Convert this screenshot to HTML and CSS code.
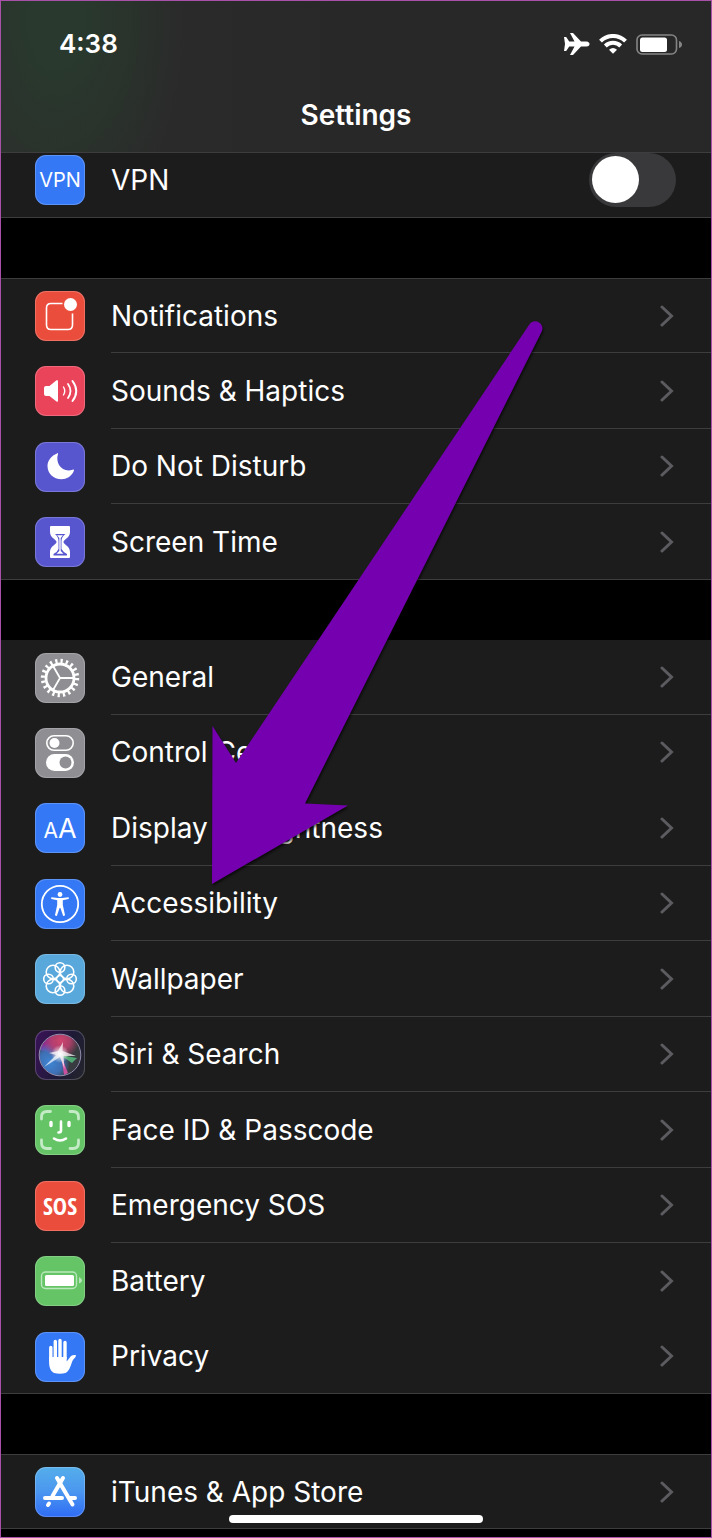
FILE: index.html
```html
<!DOCTYPE html>
<html lang="en">
<head>
    <meta charset="UTF-8">
    <meta name="viewport" content="width=device-width, initial-scale=1.0">
    <title>Settings</title>
    <link rel="stylesheet" href="styles.css">
</head>
<body>
    <svg class="defs" width="0" height="0" aria-hidden="true">
        <symbol id="chevron" viewBox="0 0 14 22">
            <path d="M2 2 L11.500 11 L2 20" fill="none" stroke="#5b5b60" stroke-width="3" stroke-linecap="round"/>
        </symbol>
    </svg>

    <header class="header">
        <div class="status-bar">
            <span class="time">4:38</span>
            <div class="status-icons">
                <svg width="26" height="22" viewBox="0 0 26 22" fill="#fff" aria-label="Airplane mode">
                    <path d="M0 4 H2.200 L5.200 8.500 H10.500 L6 0 H9 L17 8.500 H22.500 Q25.500 9 25.500 11 Q25.500 13 22.500 13.500 H17 L9 22 H6 L10.500 13.500 H5.200 L2.200 18 H0 L1 11 Z"/>
                </svg>
                <svg width="28" height="20" viewBox="0 0 28 20" fill="none" stroke="#fff" stroke-width="4" aria-label="Wi-Fi">
                    <path d="M1.500 7.200 A17.500 17.500 0 0 1 26.500 7.200"/>
                    <path d="M6.300 12 A11 11 0 0 1 21.700 12"/>
                    <path d="M14 19.800 L10 15.800 Q14 12.400 18 15.800 Z" fill="#fff" stroke="none"/>
                </svg>
                <svg width="46" height="21" viewBox="0 0 46 21" aria-label="Battery">
                    <rect x="1" y="1" width="39.500" height="19" rx="5" fill="none" stroke="#858585" stroke-width="1.600"/>
                    <rect x="4" y="3.500" width="27" height="14.500" rx="2.500" fill="#fff"/>
                    <path d="M43 7 Q46 8 46 10.500 Q46 13 43 14 Z" fill="#858585"/>
                </svg>
            </div>
        </div>
        <h1>Settings</h1>
    </header>

    <main>
        <ul class="group group-top">
            <li class="row">
                <span class="icon blue"><span class="vpn-text">VPN</span></span>
                <div class="row-body">
                    <label for="vpn">VPN</label>
                    <input type="checkbox" id="vpn" class="switch" role="switch">
                </div>
            </li>
        </ul>

        <ul class="group">
            <li><a class="row" href="#notifications">
                <span class="icon red"><svg viewBox="0 0 50 50" fill="none" stroke="#fff" stroke-width="1.600">
                    <path d="M27.500 12.500 H16 Q11.500 12.500 11.500 17 V34 Q11.500 38.500 16 38.500 H33 Q37.500 38.500 37.500 34 V22.500"/>
                    <circle cx="35.500" cy="13.500" r="6.500" fill="#fff" stroke="none"/>
                </svg></span>
                <span class="row-body">Notifications <svg class="chevron"><use href="#chevron"/></svg></span>
            </a></li>
            <li><a class="row" href="#sounds">
                <span class="icon pink"><svg viewBox="0 0 50 50" fill="none" stroke="#fff" stroke-linecap="round">
                    <path d="M11 20 H14.500 L21.500 14.300 Q23 13.800 23 15 V35 Q23 36 21.500 35.500 L14.500 30 H11 Q9 30 9 28 V22 Q9 20 11 20 Z" fill="#fff" stroke="none"/>
                    <path d="M28.500 21 Q31 25 28.500 29" stroke-width="1.400"/>
                    <path d="M33 18 Q38 25 33 32" stroke-width="1.800"/>
                    <path d="M37.500 15 Q45 25 37.500 35" stroke-width="2"/>
                </svg></span>
                <span class="row-body">Sounds &amp; Haptics <svg class="chevron"><use href="#chevron"/></svg></span>
            </a></li>
            <li><a class="row" href="#do-not-disturb">
                <span class="icon indigo"><svg viewBox="0 0 50 50" fill="#fff">
                    <path d="M22 11.500 Q23.500 10.500 23 12 C20 21 27 31 37.500 27.800 Q39.500 27 38.800 29 C36.500 34.500 31.500 37.200 26.500 37.200 C18.500 37.200 12.500 31.500 12.500 24 C12.500 18.500 16.500 13.500 22 11.500 Z"/>
                </svg></span>
                <span class="row-body">Do Not Disturb <svg class="chevron"><use href="#chevron"/></svg></span>
            </a></li>
            <li><a class="row" href="#screen-time">
                <span class="icon indigo"><svg viewBox="0 0 50 50">
                    <path d="M16 9 H34 Q35 9 35 10 V15 C35 21 28.500 22.500 28.500 25 C28.500 27.500 35 29 35 35 V40 Q35 41 34 41 H16 Q15 41 15 40 V35 C15 29 21.500 27.500 21.500 25 C21.500 22.500 15 21 15 15 V10 Q15 9 16 9 Z" fill="#fff"/>
                    <path d="M20 17 H30.500 Q26.500 20 26.500 24 V32 Q28.500 35.500 32 37 V38.500 H18.500 V37 Q22 35.500 23.500 32 V24 Q23.500 20 20 17 Z" fill="#5856ce"/>
                    <path d="M22 18.300 H28 L25.700 21 V34 L28.500 36.800 H21.500 L24.300 34 V21 Z" fill="#fff"/>
                </svg></span>
                <span class="row-body">Screen Time <svg class="chevron"><use href="#chevron"/></svg></span>
            </a></li>
        </ul>

        <ul class="group group-device">
            <li><a class="row" href="#general">
                <span class="icon gray"><svg viewBox="0 0 50 50" fill="none" stroke="#fff">
                    <circle cx="25" cy="25" r="17" stroke-width="4.400" stroke-dasharray="2.240 3.101"/>
                    <circle cx="25" cy="25" r="14" stroke-width="2.800"/>
                    <path d="M25 25 H38 M25 25 L18.500 13.700 M25 25 L18.500 36.300" stroke-width="1.800"/>
                </svg></span>
                <span class="row-body">General <svg class="chevron"><use href="#chevron"/></svg></span>
            </a></li>
            <li><a class="row no-line" href="#control-center">
                <span class="icon gray"><svg viewBox="0 0 50 50">
                    <rect x="11.800" y="7.800" width="26.400" height="14.400" rx="7.200" fill="none" stroke="#fff" stroke-width="1.600"/>
                    <circle cx="19.500" cy="15" r="5" fill="#fff"/>
                    <rect x="11" y="26" width="28" height="17" rx="8.500" fill="#fff"/>
                    <circle cx="30.500" cy="34.500" r="6" fill="#8e8e93"/>
                </svg></span>
                <span class="row-body">Control Center <svg class="chevron"><use href="#chevron"/></svg></span>
            </a></li>
            <li><a class="row" href="#display">
                <span class="icon blue"><span class="aa-text"><small>A</small>A</span></span>
                <span class="row-body">Display &amp; Brightness <svg class="chevron"><use href="#chevron"/></svg></span>
            </a></li>
            <li><a class="row" href="#accessibility">
                <span class="icon blue"><svg viewBox="0 0 50 50">
                    <circle cx="25" cy="25" r="18.200" fill="none" stroke="#fff" stroke-width="1.800"/>
                    <circle cx="25" cy="15.500" r="2.400" fill="#fff"/>
                    <path d="M16.500 18.300 L23 19 H27 L33.500 18.300 Q34.500 19.400 33.500 20 L27.800 21.200 V26 L30 36 Q29 37.800 28 36.400 L25.400 29 H24.600 L22 36.400 Q21 37.800 20 36 L22.200 26 V21.200 L16.500 20 Q15.500 19.400 16.500 18.300 Z" fill="#fff"/>
                </svg></span>
                <span class="row-body">Accessibility <svg class="chevron"><use href="#chevron"/></svg></span>
            </a></li>
            <li><a class="row" href="#wallpaper">
                <span class="icon sky"><svg viewBox="0 0 50 50" fill="none" stroke="#fff" stroke-width="1.600">
                    <circle cx="32" cy="18" r="6.800"/>
                    <circle cx="32" cy="32" r="6.800"/>
                    <circle cx="18" cy="32" r="6.800"/>
                    <circle cx="18" cy="18" r="6.800"/>
                    <circle cx="25" cy="13.500" r="4.800"/>
                    <circle cx="36.500" cy="25" r="4.800"/>
                    <circle cx="25" cy="36.500" r="4.800"/>
                    <circle cx="13.500" cy="25" r="4.800"/>
                    <circle cx="25" cy="25" r="3.500"/>
                </svg></span>
                <span class="row-body">Wallpaper <svg class="chevron"><use href="#chevron"/></svg></span>
            </a></li>
            <li><a class="row" href="#siri">
                <span class="icon siri"><svg viewBox="0 0 50 50">
                    <defs>
                        <radialGradient id="siriPink" cx="26" cy="11" r="18" gradientUnits="userSpaceOnUse">
                            <stop offset="0" stop-color="#cf4470"/><stop offset=".500" stop-color="#b8406c" stop-opacity=".900"/><stop offset="1" stop-color="#b8406c" stop-opacity="0"/>
                        </radialGradient>
                        <radialGradient id="siriBlue" cx="15" cy="33" r="20" gradientUnits="userSpaceOnUse">
                            <stop offset="0" stop-color="#3f86d4"/><stop offset=".600" stop-color="#3f78c8" stop-opacity=".850"/><stop offset="1" stop-color="#3c85d8" stop-opacity="0"/>
                        </radialGradient>
                        <radialGradient id="siriGlow" cx="25" cy="24" r="9" gradientUnits="userSpaceOnUse">
                            <stop offset="0" stop-color="#fff"/><stop offset="1" stop-color="#fff" stop-opacity="0"/>
                        </radialGradient>
                    </defs>
                    <circle cx="25" cy="25" r="20.500" fill="#383b40"/>
                    <path d="M25 25 L5 20 A20.500 20.500 0 0 1 18 6 Z" fill="#8a2c91"/>
                    <circle cx="25" cy="25" r="20.500" fill="url(#siriBlue)"/>
                    <circle cx="25" cy="25" r="20.500" fill="url(#siriPink)"/>
                    <path d="M26 25 L33 43 L29 45 Z" fill="#c9519f"/>
                    <path d="M25 25 L42 28 L37 33 Z" fill="#4fa873"/>
                    <circle cx="25" cy="24" r="9" fill="url(#siriGlow)"/>
                    <path d="M28 12 L27.500 21 L41 26 L28.500 26 L29.500 39 L25 27 L9 37 L21 25 L14 23 L23 21 Z" fill="#fff" fill-opacity=".700"/>
                    <circle cx="25" cy="25" r="20.800" fill="none" stroke="#948fae" stroke-width="1"/>
                </svg></span>
                <span class="row-body">Siri &amp; Search <svg class="chevron"><use href="#chevron"/></svg></span>
            </a></li>
            <li><a class="row" href="#face-id">
                <span class="icon green"><svg viewBox="0 0 50 50" fill="none" stroke="#fff" stroke-linecap="round">
                    <path d="M6.500 14 V12 Q6.500 6.500 12 6.500 H15.500 M35 6.500 H38 Q43.500 6.500 43.500 12 V14 M43.500 35 V38 Q43.500 43.500 38 43.500 H35 M15.500 43.500 H12 Q6.500 43.500 6.500 38 V35" stroke="#c3ebc6" stroke-width="2.800"/>
                    <path d="M16 17.500 V20.500 M34 17.500 V20.500" stroke-width="3.400"/>
                    <path d="M26 16.500 V25.500 Q26 27.500 23.500 27.500" stroke-width="2.600"/>
                    <path d="M19 33.500 Q25 37.500 31 33.500" stroke-width="2.600"/>
                </svg></span>
                <span class="row-body">Face ID &amp; Passcode <svg class="chevron"><use href="#chevron"/></svg></span>
            </a></li>
            <li><a class="row" href="#sos">
                <span class="icon red"><span class="sos-text">SOS</span></span>
                <span class="row-body">Emergency SOS <svg class="chevron"><use href="#chevron"/></svg></span>
            </a></li>
            <li><a class="row no-line" href="#battery">
                <span class="icon green"><svg viewBox="0 0 50 50">
                    <rect x="6.500" y="16" width="35" height="16.500" rx="4" fill="none" stroke="#b9e7bc" stroke-width="1.400"/>
                    <rect x="10" y="19" width="29" height="11" rx="1.500" fill="#fff"/>
                    <path d="M44 21 Q47 22.500 47 24.500 Q47 26.500 44 27.500 Z" fill="#b9e7bc"/>
                </svg></span>
                <span class="row-body">Battery <svg class="chevron"><use href="#chevron"/></svg></span>
            </a></li>
            <li><a class="row" href="#privacy">
                <span class="icon blue"><svg viewBox="0 0 50 50" fill="none" stroke="#fff" stroke-width="3.400" stroke-linecap="round">
                    <path d="M15.800 15.500 V28 M20.300 9.500 V26 M25 8.500 V26 M30 10.500 V26"/>
                    <path d="M14.100 25 H31.700 V29.500 L36 24 Q38 22.500 40.500 23 Q41.500 23.500 40.500 25 Q38 27.500 37 30 C35.500 34.500 34 39.500 30.500 41 Q25 42.500 19 41 C15 39 14.100 34 14.100 30 Z" fill="#fff" stroke="none"/>
                </svg></span>
                <span class="row-body">Privacy <svg class="chevron"><use href="#chevron"/></svg></span>
            </a></li>
        </ul>

        <ul class="group">
            <li><a class="row" href="#app-store">
                <span class="icon store"><svg viewBox="0 0 50 50" fill="none" stroke="#fff" stroke-width="4" stroke-linecap="round">
                    <path d="M28 11 L17.500 29"/>
                    <path d="M22 11 L37.500 37.500"/>
                    <path d="M10 31 H27 M35 31 H40"/>
                    <path d="M14 36.500 L13 38"/>
                </svg></span>
                <span class="row-body">iTunes &amp; App Store <svg class="chevron"><use href="#chevron"/></svg></span>
            </a></li>
        </ul>
    </main>

    <svg class="arrow" width="336" height="564" viewBox="0 0 336 564" aria-hidden="true">
        <path d="M2 564 L2.500 406 L26 443 L319 5 A7 7 0 0 1 331.500 12 L95 483.500 L138 485.500 Z" fill="#7500b0"/>
    </svg>
    <div class="home-indicator"></div>
</body>
</html>
```

FILE: styles.css
```css
* {
    box-sizing: border-box;
}
body {
    position: relative;
    margin: 0;
    min-height: 100vh;
    background-color: #000000;
    color: #ffffff;
    border: 1px solid #a851a8;
    font-family: Inter, "Liberation Sans", sans-serif;
    font-size: 28px;
    line-height: 36px;
}
.defs {
    position: absolute;
}
.header {
    padding-top: 28px;
    border-bottom: 1px solid #3d3d3f;
    background: radial-gradient(ellipse 130px 220px at 55px 20px, #29392d 20%, rgba(41, 57, 45, 0) 100%), linear-gradient(90deg, #2c2c2c, #282828 50%);
}
.status-bar {
    display: flex;
    justify-content: space-between;
    align-items: center;
    height: 30px;
    padding: 0 29px 0 58px;
}
.time {
    font-size: 26px;
    font-weight: 600;
}
.status-icons {
    display: flex;
    align-items: center;
    gap: 9px;
}
h1 {
    margin: 0;
    padding: 38px 0 19px;
    font-size: 28px;
    font-weight: 600;
    text-align: center;
}
.group {
    list-style: none;
    margin: 0 0 60px;
    padding: 0;
    border-bottom: 1px solid #3d3d3f;
    background-color: #1c1c1c;
}
.group:last-child {
    margin-bottom: 0;
}
.group + .group {
    border-top: 1px solid #3d3d3f;
}
.group + .group-device {
    border-top: none;
}
.row {
    display: flex;
    align-items: center;
    gap: 26px;
    height: 75px;
    padding-left: 34px;
    color: #ffffff;
    text-decoration: none;
}
.row-body {
    display: flex;
    flex: 1;
    align-items: center;
    justify-content: space-between;
    height: 100%;
    padding-right: 37px;
    border-bottom: 1px solid #3d3d3f;
}
.group li:nth-child(even) .row,
.group-device li:nth-child(odd) .row {
    height: 76px;
}
.group-device li:nth-child(even) .row,
.group li:first-child .row {
    height: 75px;
}
.group + .group:not(.group-device) li:first-child .row {
    height: 74px;
}
.group li:last-child .row {
    margin-bottom: -1px;
}
li:last-child .row-body,
.no-line .row-body,
.group-top .row-body {
    border-bottom-color: transparent;
}
.group-top .row {
    height: 64px;
    padding-bottom: 10px;
}
.icon {
    display: flex;
    align-items: center;
    justify-content: center;
    flex: none;
    width: 50px;
    height: 50px;
    border-radius: 11px;
    overflow: hidden;
    box-shadow: inset 0 0 0 1px rgba(255, 255, 255, 0.2);
}
.icon svg {
    width: 50px;
    height: 50px;
}
.blue { background-color: #3478f6; }
.red { background-color: #eb4d3d; }
.pink { background-color: #ea445a; }
.indigo { background-color: #5856ce; }
.gray { background-color: #8e8e93; }
.sky { background-color: #58a8dc; }
.green { background-color: #65c466; }
.siri { background: linear-gradient(110deg, #3b1259, #1d1a35 60%, #24262c); }
.store { background: linear-gradient(#55aeea, #4a96f0 50%, #2f6cf5); }
.vpn-text {
    font-size: 20px;
}
.aa-text {
    padding-top: 4px;
    font-size: 27px;
    line-height: 30px;
}
.aa-text small {
    font-size: 21px;
}
.sos-text {
    font-family: "Open Sans Condensed", "Noto Sans Condensed", Roboto, sans-serif;
    font-size: 24px;
    font-weight: bold;
}
.chevron {
    width: 14px;
    height: 22px;
}
.switch {
    appearance: none;
    display: flex;
    align-items: center;
    width: 87px;
    height: 54px;
    margin: 0 -2px 0 0;
    padding: 3px;
    border-radius: 27px;
    background-color: #39393b;
}
.switch::before {
    content: "";
    width: 47px;
    height: 47px;
    border-radius: 50%;
    background-color: #ffffff;
}
.switch:checked {
    justify-content: flex-end;
    background-color: #65c466;
}
.arrow {
    position: absolute;
    left: 209px;
    top: 319px;
    overflow: visible;
    filter: drop-shadow(1px 2px 1px rgba(0, 0, 0, 0.6));
    pointer-events: none;
}
.home-indicator {
    position: absolute;
    left: 50%;
    bottom: 14px;
    width: 254px;
    height: 8px;
    margin-left: -127px;
    border-radius: 4px;
    background-color: #ffffff;
}
```
